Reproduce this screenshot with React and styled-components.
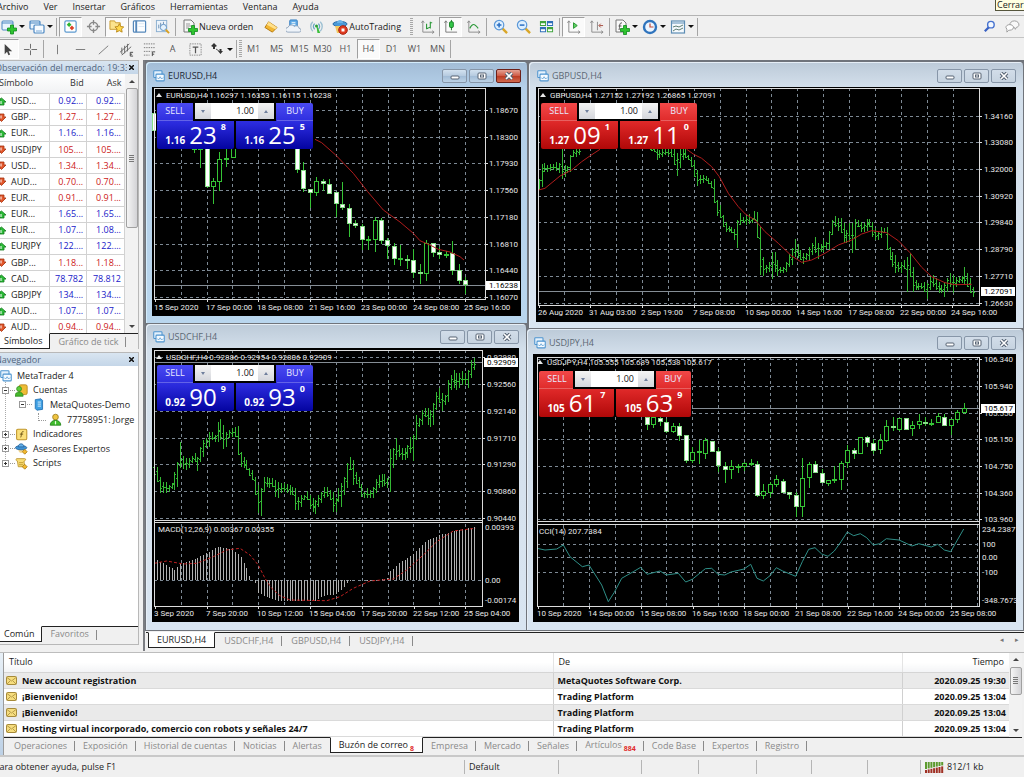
import React from "react";
import styled, { createGlobalStyle, css } from "styled-components";

const Global = createGlobalStyle`
  *, *::before, *::after { box-sizing: border-box; }
  body { margin: 0; background: #f0f0f0; }
  button, input { font: inherit; color: inherit; margin: 0; padding: 0; border: 0; background: none; }
  ul { list-style: none; margin: 0; padding: 0; }
  table { border-collapse: collapse; border-spacing: 0; }
`;

const Page = styled.div`
  position: relative;
  display: flex;
  flex-direction: column;
  min-height: 100vh;
  overflow: hidden;
  background: #f0f0f0;
  color: #1c1c1c;
  font: 9px/12px "Open Sans", "Noto Sans", sans-serif;
`;

/* ---------- menu and toolbars ---------- */

const MenuBar = styled.nav`
  display: flex;
  height: 16px;
  padding-right: 40px;
  margin-left: -3px;
  gap: 15px;
  border-bottom: 1px solid #b4b4b4;
`;
const MenuItem = styled.button`
  height: 14px;
  white-space: nowrap;
`;
const CloseTip = styled.div`
  position: absolute;
  top: -1px;
  right: -2px;
  width: 31px;
  height: 12px;
  padding-left: 1px;
  line-height: 10px;
  border: 1px solid #55553c;
  background: #ffffe1;
`;
const Toolbar = styled.div`
  display: flex;
  align-items: center;
  height: 22px;
  overflow: hidden;
  border-bottom: ${(p) => (p.$line ? "1px solid #c4c4c4" : "0")};
  margin-left: ${(p) => (p.$shift ? "-4px" : "-1px")};
`;
const Tool = styled.button`
  display: flex;
  flex: none;
  align-items: center;
  justify-content: center;
  width: 23px;
  height: 20px;
  color: #555;
  ${(p) =>
    p.$pressed &&
    css`
      background: #fafafa;
      border: 1px solid;
      border-color: #9f9f9f #fff #fff #9f9f9f;
    `}
`;
const SplitTool = styled(Tool)`
  width: 28px;
  gap: 1px;
`;
const Caret = styled.span`
  width: 0;
  margin-left: 1px;
  border: 3px solid transparent;
  border-top-color: #111;
  border-bottom: 0;
`;
const TextTool = styled(Tool)`
  width: auto;
  padding: 0 6px 0 4px;
  gap: 1px;
  color: #1c1c1c;
  white-space: nowrap;
`;
const Divider = styled.span`
  flex: none;
  width: 1px;
  height: 18px;
  margin: 0 2px 0 1px;
  background: #a5a5a5;
`;
const Grip = styled.span`
  flex: none;
  width: 3px;
  height: 18px;
  margin: 0 ${(p) => (p.$wide ? 3 : 0)}px;
  background: repeating-linear-gradient(#a8a8a8 0 1px, #f0f0f0 1px 2px);
`;
const Push = styled.span`
  flex: 1;
`;

const Svg = ({ size = 16, children }) => (
  <svg width={size} height={size} viewBox="0 0 16 16" fill="none" aria-hidden="true">
    {children}
  </svg>
);
const Plus = ({ x = 0, y = 0 }) => (
  <path
    transform={`translate(${x} ${y})`}
    d="M3 0h3v3h3v3H6v3H3V6H0V3h3z"
    fill="#2fc42f"
    stroke="#0d8a1c"
    strokeWidth=".8"
  />
);
const icons = {
  newChart: (
    <>
      <rect x="1" y="2" width="11" height="9" rx="1" fill="#eaf4fd" stroke="#4b87c2" />
      <path d="M1 4h11" stroke="#4b87c2" />
      <Plus x={6.5} y={6} />
    </>
  ),
  profiles: (
    <>
      <rect x="1" y="2" width="10" height="8" rx="1" fill="#eaf4fd" stroke="#4b87c2" strokeWidth="1.2" />
      <path d="M1 4h10" stroke="#4b87c2" />
      <rect x="5" y="6" width="10" height="8" rx="1" fill="#f7fbff" stroke="#4b87c2" strokeWidth="1.2" />
      <path d="M7 12h6" stroke="#79a9d8" />
    </>
  ),
  market: (
    <>
      <rect x="2" y="2" width="12" height="12" rx="1.5" fill="#fff" stroke="#5f9bd0" strokeWidth="1.3" />
      <path d="M4 6l2.500-2.500L9 6 6.500 8.500z" fill="#2db52d" />
      <path d="M7 9.500L9.500 7l2.500 2.500L9.500 12z" fill="#dc4327" />
    </>
  ),
  target: (
    <>
      <circle cx="8" cy="8" r="4.500" stroke="#888" strokeWidth="1.400" />
      <path d="M8 1v5M8 10v5M1 8h5M10 8h5" stroke="#888" strokeWidth="1.400" />
    </>
  ),
  favorites: (
    <>
      <path d="M1 4V2h5l1 2h5v7H1z" fill="#fbe38d" stroke="#c79a2c" />
      <path d="M11 5l1.500 3 3.200.4-2.300 2.300.6 3.300-3-1.600L8 14l.6-3.300-2.300-2.300 3.200-.4z" fill="#ffd84b" stroke="#bb8a1b" />
    </>
  ),
  terminal: (
    <>
      <rect x="1.500" y="2" width="13" height="12" rx="1" fill="#fdfeff" stroke="#5588bb" strokeWidth="1.300" />
      <path d="M4.500 2v12" stroke="#5588bb" strokeWidth="2" />
      <path d="M7 5h6M7 8h6" stroke="#dbe8f3" />
    </>
  ),
  tester: (
    <>
      <rect x="1.500" y="1.500" width="11" height="12" fill="#edf4fb" stroke="#89aed0" />
      <path d="M4 10V6M6 8V4M9 6V3" stroke="#6c8fb2" />
      <circle cx="9" cy="9" r="3.300" fill="#e5f2fd" stroke="#5b8fc2" />
      <path d="M11.500 11.500L15 15" stroke="#d9a022" strokeWidth="2" />
    </>
  ),
  order: (
    <>
      <path d="M2 1h7l3 3v9H2z" fill="#f6f6f6" stroke="#777" />
      <path d="M4 5h4M4 7h5M4 9h3" stroke="#999" />
      <Plus x={6.5} y={6.5} />
    </>
  ),
  gold: (
    <>
      <path d="M2 9l4-6 9 6-5 5z" fill="#f2b632" stroke="#b57a12" />
      <path d="M6 3l9 6-2 2-9-5z" fill="#ffe08a" />
    </>
  ),
  cloud: (
    <>
      <rect x="4" y="1" width="8" height="8" rx="1" fill="#65aee8" stroke="#2e7ac0" />
      <path d="M6 4h4M6 6h4" stroke="#fff" />
      <path d="M2 14a2.500 2.500 0 010-5 4 4 0 017-1 3 3 0 015 2 2 2 0 010 4z" fill="#eef3f9" stroke="#93a6bd" />
    </>
  ),
  signal: (
    <>
      <path d="M4 3a7 7 0 000 10M12 3a7 7 0 010 10" stroke="#9bbfd2" strokeWidth="1.400" />
      <path d="M6 5a4.500 4.500 0 000 6M10 5a4.500 4.500 0 010 6" stroke="#6aa6c4" strokeWidth="1.300" />
      <path d="M8 8l1 7h3L9 8z" fill="#3cbf3c" />
      <circle cx="8" cy="7.500" r="1.600" fill="#2a9f3a" />
    </>
  ),
  auto: (
    <>
      <ellipse cx="8" cy="5" rx="7" ry="2.600" fill="#4b9ad8" stroke="#2a6ca8" />
      <path d="M5 4c0-4 6-4 6 0z" fill="#6bb3e8" />
      <path d="M3 7h9v7H5z" fill="#f3c85e" />
      <circle cx="11" cy="11" r="4.300" fill="#e03a20" stroke="#a92412" />
      <rect x="9.500" y="9.500" width="3" height="3" fill="#fff" />
    </>
  ),
  bars: (
    <>
      <path d="M3 2v12h12M1.500 4L3 2l1.500 2M13 12.500L15 14l-2 1.500" stroke="#8a8a8a" />
      <path d="M7 5v6M7 10h2M11 3v7M9 9h2M11 4h2" stroke="#2f9b3c" strokeWidth="1.200" />
    </>
  ),
  candle: (
    <>
      <path d="M3 2v12h12M1.500 4L3 2l1.500 2" stroke="#777" />
      <path d="M9 1v11" stroke="#157d22" />
      <rect x="7" y="3" width="4" height="6" rx="1" fill="#34c84a" stroke="#157d22" />
    </>
  ),
  line: (
    <>
      <path d="M3 2v12h12M1.500 4L3 2l1.500 2M13 12.500L15 14l-2 1.500" stroke="#8a8a8a" />
      <path d="M4 10c3-6 5-5 9 0" stroke="#2f9b3c" strokeWidth="1.200" />
    </>
  ),
  zoomIn: (
    <>
      <path d="M10 10l5 5" stroke="#d9a628" strokeWidth="2.500" />
      <circle cx="6.500" cy="6.500" r="5" fill="#dff0ff" stroke="#5b98d8" strokeWidth="1.300" />
      <path d="M4 6.500h5M6.500 4v5" stroke="#2a6fc4" strokeWidth="1.600" />
    </>
  ),
  zoomOut: (
    <>
      <path d="M10 10l5 5" stroke="#d9a628" strokeWidth="2.500" />
      <circle cx="6.500" cy="6.500" r="5" fill="#dff0ff" stroke="#5b98d8" strokeWidth="1.300" />
      <path d="M4 6.500h5" stroke="#2a6fc4" strokeWidth="1.600" />
    </>
  ),
  tile: (
    <>
      <rect x="1" y="2" width="14" height="12" fill="#e8f1fa" />
      <path d="M1 2h6.500v5.500H1zM8.500 8.500H15V14H8.500z" fill="#3fa43c" />
      <path d="M8.500 2H15v5.500H8.500zM1 8.500h6.500V14H1z" fill="#2f6fb8" />
      <path d="M2 5.500h4.500M9.500 5.500H14M2 12h4.500M9.500 12H14" stroke="#fff" strokeWidth="2" />
    </>
  ),
  scroll: (
    <>
      <path d="M3 2v12h12M1.500 4L3 2l1.500 2M13 12.500L15 14l-2 1.500" stroke="#8a8a8a" />
      <path d="M8 4l4 3-4 3z" fill="#5fcf62" stroke="#279632" />
    </>
  ),
  shift: (
    <>
      <path d="M3 2v12h12M1.500 4L3 2l1.500 2M13 12.500L15 14l-2 1.500M9 3v9" stroke="#8a8a8a" />
      <path d="M15 7h-4M12.500 5L10.500 7l2 2" stroke="#a4493b" />
    </>
  ),
  indicators: (
    <>
      <path d="M2 1h7l3 3v9H2z" fill="#fafafa" stroke="#777" />
      <path d="M8 4c-3-1-2 4-3 7M4.500 7h3" stroke="#555" />
      <Plus x={6.5} y={6.5} />
    </>
  ),
  clock: (
    <>
      <circle cx="8" cy="8" r="6" fill="#eef6ff" stroke="#2f74bd" strokeWidth="2.400" />
      <path d="M8 4.500V8h3.500" stroke="#c14b3a" strokeWidth="1.200" />
    </>
  ),
  template: (
    <>
      <rect x="1.500" y="2" width="13" height="12" fill="#f4f9fd" stroke="#5d8db4" strokeWidth="1.200" />
      <path d="M2 4h12" stroke="#5d8db4" />
      <path d="M3 8l3-1 3 1 4-2M3 12l3-2 3 1 4-2" stroke="#5e7d72" />
    </>
  ),
  search: (
    <>
      <circle cx="9.500" cy="6" r="3.500" fill="#f3f8ff" stroke="#4672cf" strokeWidth="1.500" />
      <path d="M7 9l-4 4" stroke="#3a62c4" strokeWidth="2.400" />
    </>
  ),
  chat: (
    <>
      <path d="M8 9c-5-1-3-7 2-7s7 6 2 7l-1 2-1-2z" fill="#f8f8f8" stroke="#9a9a9a" />
      <path d="M1 9c0-4 8-4 8 0 0 3-4 3-5 3l-2 2v-3z" fill="#fff" stroke="#9a9a9a" />
    </>
  ),
  cursor: <path d="M5 2v11l2.500-2.500L9 14l1.800-.8-1.600-3.400H13z" fill="#444" />,
  cross: <path d="M8 2v5M8 9v5M1 8h6M9 8h6" stroke="#666" />,
  vline: <path d="M8 3v10" stroke="#777" />,
  hline: <path d="M3 8h10" stroke="#777" />,
  trend: <path d="M3 13L13 4" stroke="#777" />,
  channel: (
    <>
      <path d="M1 11L11 2M3 14l10-9M3 6v7M6 4v8M9 2v8" stroke="#666" />
      <path d="M15 11h-3v4h3M12 13h2" stroke="#444" />
    </>
  ),
  fibo: (
    <>
      <path d="M2 2h12M2 6h12M2 10h8M2 14h6" stroke="#777" strokeDasharray="1.500 1" />
      <path d="M14 10.500h-3V15M11 13h2" stroke="#444" />
    </>
  ),
  textLabel: (
    <>
      <rect x="2" y="2" width="12" height="12" stroke="#888" strokeDasharray="1.500 1" />
      <path d="M5 5.500h6M8 5.500V12" stroke="#555" strokeWidth="1.300" />
    </>
  ),
  arrows: (
    <>
      <path d="M2 5l3-3 3 3-2 1v2H4V6zM9 10h1.500V8h2v2H14l-2.500 3z" fill="#333" />
      <path d="M7 8l3 2" stroke="#555" />
    </>
  ),
  chart: (
    <>
      <rect x="1" y="1" width="11" height="9" rx="1" fill="#e4f1fc" stroke="#4d94cf" strokeWidth="1.400" />
      <rect x="4" y="5.500" width="11" height="9" rx="1" fill="#f6fbff" stroke="#4d94cf" strokeWidth="1.400" />
      <path d="M5.500 10l2 2 2-3 2 3 2-2" stroke="#4d94cf" />
    </>
  ),
  users: (
    <>
      <rect x="5" y="1" width="10" height="12" rx="2" fill="#eebc35" stroke="#b5851b" />
      <circle cx="5" cy="6" r="3" fill="#5fce3c" stroke="#2e8d1d" />
      <path d="M0 15c0-7 10-7 10 0z" fill="#46b82b" stroke="#2e8d1d" />
    </>
  ),
  server: (
    <>
      <path d="M4 2l7-1 2 2v11l-7 1-2-2z" fill="#3f9fe2" stroke="#1b6db0" />
      <path d="M7 5h4M7 7.500h4M7 10h4" stroke="#d6efff" strokeWidth="1.200" />
    </>
  ),
  user: (
    <>
      <circle cx="8" cy="5" r="3.500" fill="#f0c441" stroke="#9a7a18" />
      <path d="M1.500 15c0-8 13-8 13 0z" fill="#3fbd2c" stroke="#23811a" />
      <path d="M8 10v4" stroke="#eaffe0" strokeWidth="1.500" />
    </>
  ),
  fx: (
    <>
      <rect x="2" y="1.500" width="12.500" height="13" rx="1.500" fill="#fbe07a" stroke="#c0962b" strokeWidth="1.300" />
      <path d="M10.500 4.500c-3-1-2 4-3.500 7M6 7.500h4" stroke="#6d5418" strokeWidth="1.200" />
    </>
  ),
  expert: (
    <>
      <path d="M4 9c0 6 7 6 7 0z" fill="#f4d890" />
      <ellipse cx="7.500" cy="7" rx="7" ry="2.600" fill="#3f93d6" stroke="#25639a" />
      <path d="M4 6c0-5 7-5 7 0z" fill="#64b0ea" stroke="#25639a" />
      <path d="M12 9l3 3-3 3-3-3z" fill="#f4b92e" stroke="#a87a14" />
    </>
  ),
  script: (
    <>
      <path d="M2 2h10c2 0 1 3-1 3l1 7H4L3 5C1 5 1 2 2 2z" fill="#f8dd74" stroke="#b78f25" />
      <path d="M5 7h5M5 9.500h5" stroke="#b78f25" />
      <path d="M12 9l3 3-3 3-3-3z" fill="#f4b92e" stroke="#a87a14" />
    </>
  ),
};
const Icon = ({ name, size }) => <Svg size={size}>{icons[name]}</Svg>;

const IconTool = ({ name, label, pressed }) => (
  <Tool $pressed={pressed} aria-label={label} aria-pressed={pressed}>
    <Icon name={name} size={15} />
  </Tool>
);
const MenuTool = ({ name, label }) => (
  <SplitTool aria-label={label} aria-haspopup="menu">
    <Icon name={name} />
    <Caret />
  </SplitTool>
);

/* ---------- shared tabs and scrollbars ---------- */

const TabStrip = styled.div`
  display: flex;
  align-items: flex-start;
  border-top: 1px solid #222;
  color: #8a8a8a;
`;
const TabButton = styled.button`
  position: relative;
  flex: none;
  height: 15px;
  padding: 0 ${(p) => p.$pad ?? 8}px;
  white-space: nowrap;
  &::after {
    content: "";
    position: absolute;
    right: 0;
    top: 3px;
    height: 10px;
    border-right: ${(p) => (p.$bare ? "0" : "1px solid #8a8a8a")};
  }
  ${(p) =>
    p.$on &&
    css`
      margin-top: -1px;
      height: 16px;
      background: #fff;
      color: #1c1c1c;
      border: 1px solid #222;
      border-top-color: #fff;
      &::after { border: 0; }
    `}
`;
const EdgeTab = styled(TabButton)`
  padding: 0 7px 0 4px;
  border-left: 0;
`;
const Badge = styled.small`
  font-size: 7px;
  line-height: 7px;
  font-weight: 700;
  color: #e02a2a;
  vertical-align: -3px;
  margin-left: 2px;
`;
const ScrollTrack = styled.div`
  flex: none;
  display: flex;
  flex-direction: column;
  align-items: center;
  width: 13px;
  background: #f2f2f2;
`;
const ScrollThumb = styled.span`
  display: flex;
  align-items: center;
  justify-content: center;
  width: 12px;
  height: ${(p) => p.$h}px;
  border: 1px solid #a0a0a0;
  border-radius: 2px;
  background: linear-gradient(90deg, #f5f5f5, #d3d3d6);
  &::before {
    content: "";
    width: 5px;
    height: 7px;
    background: repeating-linear-gradient(#777 0 1px, transparent 1px 2px);
  }
`;
const ScrollArrow = styled.button`
  flex: none;
  width: 13px;
  height: 14px;
  display: flex;
  align-items: center;
  justify-content: center;
  &::before {
    content: "";
    border: 3px solid transparent;
    border-top: ${(p) => (p.$up ? "0" : "3px solid #444")};
    border-bottom: ${(p) => (p.$up ? "3px solid #444" : "0")};
  }
`;
const Scrollbar = ({ thumb, name }) => (
  <ScrollTrack>
    <ScrollArrow $up aria-label={`${name}: subir`} />
    <ScrollThumb $h={thumb} />
    <Push />
    <ScrollArrow aria-label={`${name}: bajar`} />
  </ScrollTrack>
);

/* ---------- side panels ---------- */

const Main = styled.div`
  display: flex;
  flex: 1 0 auto;
`;
const Side = styled.aside`
  display: flex;
  flex-direction: column;
  flex: none;
  width: 145px;
  padding-right: 4px;
  border-right: 2px solid #7b7d82;
`;
const Panel = styled.section`
  display: flex;
  flex-direction: column;
  border: solid #b8b8b8;
  border-width: 1px 1px 0 0;
  flex: ${(p) => (p.$grow ? 1 : "none")};
`;
const PanelTitle = styled.header`
  display: flex;
  align-items: center;
  justify-content: space-between;
  height: 13px;
  padding-right: 2px;
  overflow: hidden;
  white-space: nowrap;
  color: #51667e;
  background: linear-gradient(#d9e5f1, #c4d6e8);
`;
const PanelName = styled.span`
  flex: 1;
  min-width: 0;
  overflow: hidden;
  text-indent: -5px;
`;
const PanelClose = styled.button`
  display: flex;
  align-items: center;
  justify-content: center;
  width: 9px;
  height: 12px;
`;
const CloseMark = () => (
  <svg width="5" height="5" viewBox="0 0 5 5" aria-hidden="true">
    <path d="M0 0l5 5M5 0L0 5" stroke="#111" strokeWidth="1.500" />
  </svg>
);
const MarketBody = styled.div`
  display: flex;
  height: 259px;
  overflow: hidden;
  background: #fff;
`;
const MarketTable = styled.table`
  flex: 1;
  height: 262px;
  table-layout: fixed;
  th {
    height: 19px;
    padding: 0 3px 0 0;
    font-weight: 400;
    color: #333;
    text-align: right;
    border-bottom: 1px solid #d5d5d5;
    background: linear-gradient(#fff, #f1f2f4);
  }
  th:first-child { text-align: left; text-indent: -1px; }
  td {
    padding: 0 3px 0 0;
    text-align: right;
    line-height: 14px;
    border: solid #d2d2d2;
    border-width: 0 1px 1px 0;
    white-space: nowrap;
  }
  td:first-child { text-align: left; }
`;
const Quote = styled.td`
  color: ${(p) => (p.$up ? "#2020c8" : "#cc2020")};
`;
const Symbol = styled.span`
  display: flex;
  align-items: center;
  gap: 5px;
`;

const quotes = [
  ["USD...", "0.92...", "0.92...", 1],
  ["GBP...", "1.27...", "1.27...", 0],
  ["EUR...", "1.16...", "1.16...", 1],
  ["USDJPY", "105....", "105....", 0],
  ["USD...", "1.34...", "1.34...", 0],
  ["AUD...", "0.70...", "0.70...", 0],
  ["EUR...", "0.91...", "0.91...", 0],
  ["EUR...", "1.65...", "1.65...", 1],
  ["EUR...", "1.07...", "1.08...", 1],
  ["EURJPY", "122....", "122....", 1],
  ["GBP...", "1.18...", "1.18...", 0],
  ["CAD...", "78.782", "78.812", 1],
  ["GBPJPY", "134....", "134....", 1],
  ["AUD...", "1.07...", "1.07...", 1],
  ["AUD...", "0.94...", "0.94...", 0],
];

const Direction = ({ up }) => (
  <svg width="6" height="9" viewBox="0 0 6 9" aria-hidden="true">
    <path
      d={up ? "M1.500 1L6 5H4v3H0V2z" : "M0 1h4v3h2L1.500 8.500 0 7z"}
      fill={up ? "#2cbb38" : "#e2562a"}
      stroke={up ? "#12791c" : "#a5320f"}
      strokeWidth=".8"
    />
    <path d={up ? "M1 4v3" : "M1 2.500v3"} stroke="#fff" />
  </svg>
);

const Tree = styled.ul`
  flex: 1;
  padding-top: 2px;
  line-height: 14px;
  background: repeating-linear-gradient(#aaa 0 1px, #fff 1px 2px) 5px 16px / 1px 80px no-repeat, #fff;
`;
const Node = styled.li`
  display: flex;
  align-items: center;
  height: ${(p) => (p.$tall ? 15 : 14)}px;
  padding-left: ${(p) => p.$in}px;
  gap: 5px;
  white-space: nowrap;
`;
const Expander = styled.button`
  position: relative;
  flex: none;
  width: 7px;
  height: 7px;
  margin-right: 1px;
  border: 1px solid #999;
  background:
    linear-gradient(#333, #333) center / 3px 1px no-repeat,
    ${(p) => (p.$open ? "" : "linear-gradient(#333, #333) center / 1px 3px no-repeat,")}
    #fff;
  &::after {
    content: "";
    position: absolute;
    left: 7px;
    top: 2px;
    width: 5px;
    border-top: 1px dotted #999;
  }
`;
const Elbow = styled.span`
  width: 8px;
  height: 8px;
  margin: 0 -2px 6px 0;
  border: dotted #999;
  border-width: 0 0 1px 1px;
`;

/* ---------- chart windows ---------- */

const Workspace = styled.main`
  display: flex;
  flex-direction: column;
  flex: 1;
  min-width: 0;
`;
const Desktop = styled.div`
  display: flex;
  padding: 2px 0 0;
  background: #70747b;
  border-bottom: 1px solid #70747b;
`;
const Stack = styled.div`
  display: flex;
  flex-direction: column;
  gap: 1px;
  min-width: 0;
  flex: ${(p) => p.$share} 1 0;
`;
const Frame = styled.section`
  padding: 0 ${(p) => p.$pad[1]}px ${(p) => p.$pad[2]}px ${(p) => p.$pad[3]}px;
  margin: 0 ${(p) => p.$gap[0]}px 0 ${(p) => p.$gap[1]}px;
  border-radius: 4px 4px 0 0;
  color: ${(p) => (p.$active ? "#1d2835" : "#5c6874")};
  background: ${(p) =>
    p.$active
      ? "linear-gradient(#a2bcd6, #b4cfe8 25px, #b9d6ee)"
      : "linear-gradient(#bccad8, #d3dfeb 25px, #d9e5f1)"};
  box-shadow: inset 1px 1px 0 ${(p) => (p.$active ? "#d4ecfb" : "#e6eef6")};
`;
const Caption = styled.header`
  display: flex;
  align-items: center;
  gap: 3px;
  height: ${(p) => p.$h}px;
  padding: 2px 0 0 1px;
`;
const CaptionButton = styled.button`
  display: flex;
  align-items: center;
  justify-content: center;
  width: 25px;
  height: 14px;
  margin-left: -1px;
  border: 1px solid ${(p) => (p.$close ? "#6d2018" : "#8796a8")};
  border-radius: 2px;
  background: ${(p) =>
    p.$close
      ? "linear-gradient(#e3a294, #cf5843 50%, #bb3a22 51%, #d2694e)"
      : p.$active
      ? "linear-gradient(#d3e2f0, #b5cadf 50%, #a2bcd6 51%, #bcd2e6)"
      : "linear-gradient(#d2dde9, #c6d3e0)"};
`;
const CaptionName = styled.span`
  flex: 1;
`;

const Canvas = styled.div`
  position: relative;
  background: #000;
  svg.plot {
    display: block;
    width: 100%;
    height: auto;
    font: 8px "Roboto", "Liberation Sans", sans-serif;
  }
`;

const DealBox = styled.div`
  position: absolute;
  left: ${(p) => p.$left}px;
  top: ${(p) => p.$top}px;
  display: grid;
  grid-template-columns: 1fr 1fr;
  gap: 2px;
  width: ${(p) => p.$w}px;
  height: 46px;
  padding: 0 1px;
  background: #000;
  color: #fff;
`;
const Deal = styled.button`
  display: flex;
  flex-direction: column;
  align-items: ${(p) => (p.$buy ? "flex-end" : "flex-start")};
  border-radius: 2px;
  background: ${(p) =>
    p.$red
      ? "linear-gradient(#f24848, #dc2626 45%, #b00808)"
      : "linear-gradient(#4a4af2, #2a2adc 45%, #0404a0)"};
`;
const DealName = styled.span`
  width: 36px;
  height: 18px;
  padding-top: 2px;
  text-align: center;
  color: #e8e8ff;
  border-bottom: 1px solid rgba(255, 255, 255, 0.25);
`;
const Price = styled.span`
  display: flex;
  align-items: flex-end;
  align-self: center;
  height: 26px;
  font-size: 10px;
  font-weight: 700;
  line-height: 13px;
`;
const Pips = styled.b`
  margin: 0 4px;
  font-size: 24px;
  line-height: 25px;
  font-weight: 400;
`;
const Point = styled.sup`
  align-self: flex-start;
  font-size: 9px;
  line-height: 11px;
`;
const Lots = styled.div`
  position: absolute;
  top: 0;
  left: 50%;
  display: flex;
  width: 83px;
  height: 18px;
  margin-left: -42px;
  border: solid #000;
  border-width: 0 2px 2px;
  background: #fff;
  color: #111;
  input {
    flex: 1;
    min-width: 0;
    padding-right: 4px;
    text-align: right;
  }
`;
const Step = styled.button`
  display: flex;
  align-items: center;
  justify-content: center;
  width: 16px;
  background: linear-gradient(#f4f4f4, #d4d6dc);
  &::before {
    content: "";
    border: 2px solid transparent;
    border-top: ${(p) => (p.$up ? "0" : "3px solid #6f7f9c")};
    border-bottom: ${(p) => (p.$up ? "3px solid #6f7f9c" : "0")};
  }
`;

const DealPanel = ({ red, top, left = 4, width, sell, buy, pair }) => (
  <DealBox $top={top} $left={left} $w={width}>
    {[["SELL", sell], ["BUY", buy]].map(([side, p], i) => (
      <Deal key={side} $red={red} $buy={i === 1}>
        <DealName>{side}</DealName>
        <Price>
          {p[0]}
          <Pips>{p[1]}</Pips>
          <Point>{p[2]}</Point>
        </Price>
      </Deal>
    ))}
    <Lots>
      <Step aria-label="Menos volumen" />
      <input aria-label={`Volumen ${pair}`} defaultValue="1.00" />
      <Step $up aria-label="Más volumen" />
    </Lots>
  </DealBox>
);

/* Plot data is stored in ticks, three to a pixel, measured from each plot's origin. */
const range = (n) => Array.from({ length: n }, (_, i) => i);

const Plot = ({ w, h, origin, box, split, gridX, gridY, subGrid = [], labels, subLabels = [], axisX, times, timeY, last, title, sub, header, children }) => {
  const X = (v) => Math.round((v - origin[0]) / 3);
  const Y = (v) => Math.round((v - origin[1]) / 3);
  const [l, t, r, b] = box;
  return (
    <svg className="plot" viewBox={`0 0 ${w} ${h}`} role="img" aria-label={title}>
      <g stroke="#7d8994" strokeDasharray="3 3" shapeRendering="crispEdges">
        {gridX.map((v) => <path key={v} d={`M${X(v) + 0.5} ${Y(t)}V${Y(b)}`} />)}
        {gridY.concat(subGrid).map((v) => <path key={v} d={`M${X(l)} ${Y(v) + 0.5}H${X(r)}`} />)}
      </g>
      <path d={`M${X(l)} ${Y(last) + 0.5}H${X(r)}`} stroke="#858d95" shapeRendering="crispEdges" />
      {children(X, Y, origin)}
      <g stroke="#dcdcdc" fill="none" shapeRendering="crispEdges">
        <rect x={X(l) + 0.5} y={Y(t) + 0.5} width={X(r) - X(l)} height={Y(b) - Y(t)} />
        {split && <path d={`M${X(l)} ${Y(split[0]) + 0.5}H${X(r)}M${X(l)} ${Y(split[1]) + 0.5}H${X(r)}`} />}
        {gridY.map((v) => <path key={v} d={`M${X(r)} ${Y(v) + 0.5}h3`} />)}
        {times.map(([v]) => <path key={v} d={`M${X(v + 3) + 0.5} ${Y(b)}v3`} />)}
      </g>
      <g fill="#e8e8e8">
        {labels.map(([v, s]) => <text key={s} x={X(axisX)} y={Y(v) + 3}>{s}</text>)}
        {subLabels.map(([v, s]) => <text key={s} x={X(axisX) - 2} y={Y(v) + 3}>{s}</text>)}
        {times.map(([v, s]) => <text key={s} x={X(v)} y={Y(timeY)}>{s}</text>)}
        <text x={14} y={header[0]}>{header[1]}</text>
        <path d={`M4 ${header[0] - 1}l3 -4 3 4z`} />
        {sub && <text x={6} y={Y(sub[0])}>{sub[1]}</text>}
      </g>
      <rect x={X(axisX) - 3} y={Y(last) - 4} width="34" height="9" fill="#fff" />
      <text x={X(axisX)} y={Y(last) + 3} fill="#000">{title}</text>
    </svg>
  );
};

const Candles = ({ data, X, Y }) => (
  <g shapeRendering="crispEdges" stroke="#35c435">
    {data.map(([x, kind, top, bottom, hi, lo]) => {
      const cx = X(x) + 0.5;
      const y = Y(top);
      const hh = Math.max(1, Y(bottom) - y - 1);
      return (
        <g key={x}>
          <path d={`M${cx} ${Y(hi)}V${Y(lo)}`} />
          <rect x={cx - 2} y={y + 0.5} width="4" height={hh} stroke={kind ? "#86dc86" : "#35c435"} fill={kind ? "#fff" : "#000"} />
        </g>
      );
    })}
  </g>
);
const Bars = ({ data, x0, step, X, Y }) => (
  <g shapeRendering="crispEdges" stroke="#34b834">
    {data.map((bar, i) => {
      if (!bar) return null;
      const next = data[i + 1] || bar;
      const prev = data[i - 1] || bar;
      const clamp = (v) => Math.min(bar[1] - 3, Math.max(bar[0] + 3, v));
      const close = clamp((next[0] + next[1]) / 2);
      const open = clamp((bar[0] + bar[1] + prev[0] + prev[1]) / 4);
      const cx = X(x0 + i * step) + 0.5;
      return (
        <path
          key={i}
          d={`M${cx} ${Y(bar[0])}V${Y(bar[1])}M${cx - 1.5} ${Y(open) + 0.5}H${cx}M${cx} ${Y(close) + 0.5}h1.5`}
        />
      );
    })}
  </g>
);
const Curve = ({ pts, origin, color, dash }) => (
  <polyline
    points={pts.map(([x, y]) => `${((x - origin[0]) / 3).toFixed(1)},${((y - origin[1]) / 3).toFixed(1)}`).join(" ")}
    fill="none"
    stroke={color}
    strokeDasharray={dash}
  />
);
const pairs = (s) => s.trim().split(/\s+/).map((p) => (p === "-" ? null : p.split(",").map(Number)));

const eurCandles = pairs(`
43,1,160,213,160,213 162,0,265,270,265,278 180,0,265,268,265,325 200,1,265,380,265,385 219,0,363,380,355,433 238,0,298,365,275,393
258,0,293,296,265,322 278,0,262,295,262,295 471,1,265,330,265,340 490,1,330,388,305,395 510,1,388,398,388,445
529,0,362,399,350,407 548,1,362,371,358,392 568,1,371,402,358,402 587,1,397,432,397,470 606,1,432,443,367,450
626,1,443,491,432,530 645,1,490,499,480,505 665,1,499,540,492,570 684,0,536,539,528,570 704,0,481,540,470,575
723,1,481,542,475,553 742,1,541,558,535,598 762,1,558,598,550,615 781,0,594,597,555,618 801,1,596,602,585,628
820,1,601,639,566,655 840,1,635,643,612,672 859,0,550,643,541,662 878,1,550,579,550,590 898,1,577,584,562,597
917,0,581,584,572,595 937,1,580,632,543,645 956,1,631,663,612,673 976,1,661,675,650,702`);
const eurAverage = pairs(`525,238 545,248 587,285 640,340 683,395 730,450 780,486 820,520 840,542 870,555 895,568 930,576 960,590 972,600`);

const jpyCandles = pairs(`
366,1,275,300,275,314 385,0,275,300,275,308 405,1,278,290,275,303 424,1,291,321,283,325 444,0,303,320,293,325
463,1,303,332,293,347 482,1,331,409,331,415 502,0,382,409,365,413 521,0,378,381,344,417 541,0,346,387,340,403
560,1,348,381,348,381 579,1,378,424,370,440 599,1,424,434,412,473 618,0,424,434,405,463 638,0,424,427,417,443
657,0,415,427,410,438 677,0,415,418,401,422 696,1,418,514,408,517 715,0,499,513,478,522 735,0,478,503,472,515
754,0,463,479,450,487 773,1,467,503,462,503 793,1,502,510,500,523 812,1,510,545,502,577 832,0,460,545,398,575
851,0,418,458,412,488 870,1,418,445,408,445 890,1,445,475,433,475 909,0,464,477,464,483 928,0,461,464,424,475
948,0,415,464,408,496 967,0,376,415,360,430 986,1,376,388,370,402 1006,0,337,387,335,387 1025,1,336,354,333,367
1045,1,354,378,342,387 1064,0,346,376,328,388 1084,0,303,347,286,350 1103,1,303,310,276,318 1122,0,280,314,280,318
1142,1,280,314,280,314 1161,0,299,312,288,333 1181,0,289,299,268,313 1200,1,290,294,275,303 1219,0,293,296,283,302
1238,0,273,295,265,295 1258,1,275,304,268,304 1277,0,283,304,283,330 1297,0,260,284,255,293 1316,0,248,263,233,266`);
const cci = pairs(`36,670 60,675 95,672 115,660 135,695 172,725 192,720 230,780 250,830 268,802 290,760 325,740 347,727 366,748
405,738 424,750 460,745 482,771 502,763 541,731 560,730 579,748 599,750 618,741 657,732 677,718 696,760 715,768 735,752 754,728
773,738 812,754 832,710 851,673 870,668 890,687 909,694 928,678 948,650 967,621 986,632 1006,626 1025,638 1045,660 1064,656
1084,641 1122,645 1161,663 1181,656 1219,666 1238,658 1258,675 1277,680 1316,612`);

const gbpBars = pairs(`
357,390 313,382 310,335 315,335 313,333 312,330 307,333 310,340 268,357 315,350 318,340 285,335 270,290 262,292 262,285
- - - - - - - - - - - - - - - - - - - - - - - -
262,272 262,275 265,300 270,295 268,292 265,285 262,288 265,290 262,315 280,348 268,325 262,300 265,295 285,300 290,322
300,350 330,377 345,372 345,370 348,362 355,373 362,385 358,430 420,468 435,475 465,500 487,515 497,515 500,518 507,540
480,565 460,495 470,490 468,495 463,492 475,490 452,480 455,535 500,645 590,648 615,640 605,635 575,657 577,635 600,648
620,640 622,640 605,635 583,620 565,615 538,590 552,595 570,600 580,613 580,600 562,600 550,585 530,580 548,597 552,575
540,575 545,568 512,572 480,525 468,500 475,512 475,520 490,548 510,550 490,545 490,580 478,570 480,500 485,515 490,515
478,512 477,500 485,530 505,540 515,540 500,535 503,520 500,570 560,600 575,620 585,640 605,635 605,640 600,628 590,695
578,650 620,695 660,690 670,690 668,688 665,695 668,718 650,690 645,680 655,690 665,700 675,700 668,710 655,695 640,680
645,700 650,680 650,670 648,668 620,675 640,680 655,700 680,712`);
const gbpAverage = [
  pairs(`41,390 60,385 105,348 140,330 170,305 196,287 225,268`),
  pairs(`485,268 506,283 530,295 560,320 583,350 610,400 640,440 661,462 690,480 720,515 760,550 800,588 830,607 860,600 900,580
  940,555 980,540 1010,522 1040,512 1085,518 1120,542 1155,578 1190,622 1220,650 1260,668 1290,674 1340,673`),
];

const chfBars = pairs(`
393,460 425,470 455,505 470,505 470,503 480,500 473,492 440,495 410,485 352,430 393,433 400,435 400,430 392,415 385,410
395,437 365,410 345,395 340,370 322,365 322,345 330,350 290,350 283,345 300,372 320,365 315,340 308,335 305,335 303,390
380,425 395,430 405,435 428,452 435,465 455,510 480,565 490,573 455,500 457,485 460,490 460,487 465,515 470,520 475,505
475,500 478,505 480,510 487,510 490,555 515,555 510,545 510,525 498,525 510,550 520,562 525,568 510,545 500,535 487,520
485,515 495,525 500,560 520,560 490,530 475,545 455,510 413,490 397,435 405,480 440,478 455,490 478,515 500,520 490,520
495,520 485,520 462,505 450,490 448,485 447,482 460,490 372,500 370,430 340,405 360,395 370,405 370,405 360,400 335,385
330,408 270,345 280,305 255,300 250,275 250,300 255,305 235,300 200,255 190,235 205,258 210,240 165,230 150,195 135,190
145,195 145,190 137,180 145,180 135,190 105,160 100,135`);
const macdProfile = pairs(`43,700 60,710 104,735 121,715 155,705 190,690 233,665 276,672 302,695 319,730 330,757 345,775 354,805 390,820 414,828
526,828 552,812 587,808 604,795 621,775 640,763 690,768 720,763 742,760 750,740 780,712 820,688 854,650 900,630 950,615 1010,605`);
const macdSignal = pairs(`43,715 80,708 130,717 170,715 220,695 260,675 300,670 330,690 355,720 375,760 395,790 420,812 450,825 560,827 600,815
640,790 690,768 760,762 800,735 850,690 890,650 940,618 1006,610`);
const macdAt = (x) => {
  const k = Math.max(1, macdProfile.findIndex((p) => p[0] >= x));
  const [a, b] = [macdProfile[k - 1], macdProfile[k]];
  return a[1] + ((b[1] - a[1]) * (x - a[0])) / (b[0] - a[0]);
};

const grid = (start, step, n) => range(n).map((i) => Math.round(start + i * step));
const zipLabels = (ys, names) => names.map((s, i) => [ys[i], s]);

const ChartWindow = ({ name, active, pad, gap, captionH, deal, children }) => (
  <Frame $active={active} $pad={pad} $gap={gap} aria-label={name}>
    <Caption $h={captionH}>
      <Icon name="chart" size={12} />
      <CaptionName>{name}</CaptionName>
      <CaptionButton $active={active} aria-label="Minimizar">
        <svg width="10" height="8"><rect x="1" y="4" width="8" height="3" rx="1" fill="#fff" stroke="#566373" /></svg>
      </CaptionButton>
      <CaptionButton $active={active} aria-label="Maximizar">
        <svg width="10" height="8"><rect x="1" y="1" width="8" height="6" rx="1" fill="#fff" stroke="#566373" /><rect x="3.500" y="3" width="3" height="2" fill="none" stroke="#566373" /></svg>
      </CaptionButton>
      <CaptionButton $close={active} aria-label="Cerrar ventana">
        <svg width="10" height="8">
          <path d="M2 1l6 6M8 1L2 7" stroke="#566373" strokeWidth="3.600" />
          <path d="M2 1l6 6M8 1L2 7" stroke="#fff" strokeWidth="1.600" />
        </svg>
      </CaptionButton>
    </Caption>
    <Canvas>
      {children}
      <DealPanel pair={name} {...deal} />
    </Canvas>
  </Frame>
);

const eurY = [151, 231, 310, 391, 471, 551, 631, 711];
const gbpY = [167, 247, 327, 407, 487, 567, 648, 728];
const chfY = [97, 178, 258, 338, 418, 498, 578];
const jpyY = [103, 183, 263, 343, 423, 503, 583];

const Charts = () => (
  <Desktop>
    <Stack $share={382}>
      <ChartWindow
        name="EURUSD,H4"
        active
        pad={[0, 6, 7, 6]}
        gap={[0, 1]}
        captionH={25}
        deal={{ top: 16, width: 158, sell: ["1.16", "23", "8"], buy: ["1.16", "25", "5"] }}
      >
        <Plot
          w={369} h={229} origin={[36, 81]} box={[42, 85, 1034, 717]}
          gridX={grid(122, 77.6, 12)} gridY={eurY} axisX={1048}
          labels={zipLabels(eurY, ["1.18670", "1.18300", "1.17930", "1.17560", "1.17180", "1.16810", "1.16440", "1.16070"])}
          times={[[42, "15 Sep 2020"], [197, "17 Sep 00:00"], [352, "18 Sep 08:00"], [507, "21 Sep 16:00"], [662, "23 Sep 00:00"], [818, "24 Sep 08:00"], [973, "25 Sep 16:00"]]}
          timeY={750} last={675} title="1.16238"
          header={[11, "EURUSD,H4  1.16297 1.16353 1.16115 1.16238"]}
        >
          {(X, Y, o) => (
            <>
              <Candles data={eurCandles} X={X} Y={Y} />
              <Curve pts={eurAverage} origin={o} color="#b01c1c" />
            </>
          )}
        </Plot>
      </ChartWindow>
      <ChartWindow
        name="USDCHF,H4"
        pad={[0, 7, 8, 6]}
        gap={[1, 1]}
        captionH={24}
        deal={{ top: 17, width: 158, sell: ["0.92", "90", "9"], buy: ["0.92", "93", "0"] }}
      >
        <Plot
          w={367} h={274} origin={[36, 69]} box={[42, 76, 1026, 843]} split={[584, 592]}
          gridX={grid(122, 77.6, 12)} gridY={chfY} subGrid={[765]} axisX={1040}
          labels={zipLabels(chfY, ["0.92980", "0.92560", "0.92140", "0.91710", "0.91290", "0.90860", "0.90440"])}
          subLabels={[[607, "0.00393"], [765, "0.00"], [825, "-0.00174"]]}
          times={[[42, "3 Sep 2020"], [197, "7 Sep 20:00"], [352, "10 Sep 12:00"], [507, "15 Sep 04:00"], [662, "17 Sep 20:00"], [818, "22 Sep 12:00"], [973, "25 Sep 04:00"]]}
          timeY={873} last={112} title="0.92909"
          header={[12, "USDCHF,H4  0.92886 0.92954 0.92806 0.92909"]}
          sub={[620, "MACD(12,26,9) 0.00367 0.00355"]}
        >
          {(X, Y, o) => (
            <>
              <Bars data={chfBars} x0={43} step={8.63} X={X} Y={Y} />
              <path
                d={range(112).map((i) => `M${X(43 + i * 8.63) + 0.5} ${Y(765)}V${Y(macdAt(43 + i * 8.63))}`).join("")}
                stroke="#b0b0b0"
                shapeRendering="crispEdges"
              />
              <Curve pts={macdSignal} origin={o} color="#c02020" dash="3 2" />
            </>
          )}
        </Plot>
      </ChartWindow>
    </Stack>
    <Stack $share={497}>
      <ChartWindow
        name="GBPUSD,H4"
        pad={[0, 7, 6, 7]}
        gap={[1, 2]}
        captionH={25}
        deal={{ red: true, top: 16, width: 158, sell: ["1.27", "09", "1"], buy: ["1.27", "11", "0"] }}
      >
        <Plot
          w={480} h={235} origin={[33, 81]} box={[38, 85, 1362, 735]}
          gridX={grid(118, 77.65, 16)} gridY={gbpY} axisX={1377}
          labels={zipLabels(gbpY, ["1.34160", "1.33080", "1.32000", "1.30920", "1.29840", "1.28790", "1.27710", "1.26630"])}
          times={[[38, "26 Aug 2020"], [193, "31 Aug 03:00"], [348, "2 Sep 19:00"], [503, "7 Sep 08:00"], [659, "10 Sep 00:00"], [814, "14 Sep 16:00"], [969, "17 Sep 08:00"], [1124, "22 Sep 00:00"], [1279, "24 Sep 16:00"]]}
          timeY={766} last={694} title="1.27091"
          header={[11, "GBPUSD,H4  1.27152 1.27192 1.26865 1.27091"]}
        >
          {(X, Y, o) => (
            <>
              <Bars data={gbpBars} x0={41} step={8.63} X={X} Y={Y} />
              {gbpAverage.map((pts, i) => <Curve key={i} pts={pts} origin={o} color="#b01c1c" />)}
            </>
          )}
        </Plot>
      </ChartWindow>
      <ChartWindow
        name="USDJPY,H4"
        pad={[0, 7, 8, 6]}
        gap={[1, 0]}
        captionH={25}
        deal={{ red: true, top: 17, left: 5, width: 154, sell: ["105", "61", "7"], buy: ["105", "63", "9"] }}
      >
        <Plot
          w={483} h={268} origin={[24, 87]} box={[35, 95, 1362, 842]} split={[589, 597]}
          gridX={grid(114, 77.55, 17)} gridY={jpyY} subGrid={[656, 697, 740]} axisX={1377}
          labels={zipLabels(jpyY, ["106.340", "105.940", "105.550", "105.150", "104.750", "104.360", "103.960"])}
          subLabels={[[612, "234.2387"], [656, "100"], [697, "0.00"], [740, "-100"], [825, "-348.7673"]]}
          times={[[35, "10 Sep 2020"], [190, "14 Sep 00:00"], [345, "15 Sep 08:00"], [500, "16 Sep 16:00"], [655, "18 Sep 00:00"], [810, "21 Sep 08:00"], [965, "22 Sep 16:00"], [1120, "24 Sep 00:00"], [1275, "25 Sep 08:00"]]}
          timeY={873} last={248} title="105.617"
          header={[11, "USDJPY,H4  105.555 105.689 105.538 105.617"]}
          sub={[626, "CCI(14) 207.7384"]}
        >
          {(X, Y, o) => (
            <>
              <Candles data={jpyCandles} X={X} Y={Y} />
              <Curve pts={cci} origin={o} color="#2f8f88" />
            </>
          )}
        </Plot>
      </ChartWindow>
    </Stack>
  </Desktop>
);

const ChartTabs = styled(TabStrip)`
  margin: 1px 0 0 1px;
  padding: 0 4px 0 2px;
  height: 18px;
`;
const TabScroll = styled.button`
  width: 7px;
  height: 14px;
  margin-left: 8px;
  font-size: 7px;
  color: #777;
`;

/* ---------- mailbox ---------- */

const Terminal = styled.section`
  display: flex;
  flex: none;
  margin-top: 1px;
  padding-right: 2px;
  border-top: 1px solid #bdbdbd;
  border-bottom: 2px solid #c9c9c9;
`;
const Spine = styled.div`
  flex: none;
  width: 4px;
  border-right: 1px solid #9b9b9b;
  background: linear-gradient(#e8f0f7, #bdd1e6);
`;
const TerminalBody = styled.div`
  flex: 1;
  min-width: 0;
`;
const MailArea = styled.div`
  display: flex;
  background: #fff;
`;
const MailTable = styled.table`
  flex: 1;
  table-layout: fixed;
  th {
    height: 20px;
    padding: 0 5px;
    font-weight: 400;
    text-align: left;
    border-right: 1px solid #e4e4e4;
    border-bottom: 1px solid #d5d5d5;
    background: linear-gradient(#fff 50%, #f3f4f6);
  }
  td {
    height: 16px;
    padding: 0 3px 0 4px;
    line-height: 15px;
    font-weight: 700;
    color: #111;
    border-right: 1px solid #d0d0d0;
    border-bottom: 1px solid #dadada;
    white-space: nowrap;
  }
  td:first-child { padding-left: 2px; }
  tr:nth-child(odd) td { background: #eaeaea; }
  th:last-child, td:last-child { text-align: right; border-right: 0; }
`;
const Subject = styled.span`
  display: flex;
  align-items: center;
  gap: 5px;
`;
const Envelope = () => (
  <svg width="11" height="9" viewBox="0 0 11 9" aria-hidden="true">
    <rect x=".5" y=".5" width="10" height="8" rx="1" fill="#f6dd7e" stroke="#a68a3a" />
    <path d="M1 1.500l4.500 3.500L10 1.500M1 8l3-3M10 8L7 5" fill="none" stroke="#a68a3a" strokeWidth=".8" />
  </svg>
);
const mails = [
  ["New account registration", "MetaQuotes Software Corp.", "2020.09.25 19:30"],
  ["¡Bienvenido!", "Trading Platform", "2020.09.25 13:04"],
  ["¡Bienvenido!", "Trading Platform", "2020.09.25 13:04"],
  ["Hosting virtual incorporado, comercio con robots y señales 24/7", "Trading Platform", "2020.09.25 13:04"],
];
const MailTabs = styled(TabStrip)`
  height: 18px;
  padding-left: 2px;
`;

const StatusBar = styled.footer`
  display: grid;
  grid-template-columns: 464fr 94fr 83fr 57fr 58fr 55fr 56fr 53fr 104fr;
  flex: none;
  align-items: center;
  height: 20px;
  overflow: hidden;
`;
const StatusCell = styled.span`
  display: flex;
  align-items: center;
  gap: 3px;
  height: 14px;
  padding-left: 4px;
  white-space: nowrap;
  border-left: 1px solid #b5b5b5;
`;
const StatusHint = styled(StatusCell)`
  border: 0;
  padding: 0;
  text-indent: -6px;
`;

const timeframes = ["M1", "M5", "M15", "M30", "H1", "H4", "D1", "W1", "MN"];

const NavPanel = styled(Panel)`
  margin: 3px 0 6px;
  border-bottom-width: 1px;
`;
const NavTabs = styled(TabStrip)`
  height: 18px;
`;

function Navigator() {
  return (
    <NavPanel $grow>
      <PanelTitle>
        <PanelName>Navegador</PanelName>
        <PanelClose aria-label="Cerrar navegador"><CloseMark /></PanelClose>
      </PanelTitle>
      <Tree>
        <Node $tall $in={0}><Icon name="chart" size={12} />MetaTrader 4</Node>
        <Node $in={2}><Expander $open aria-label="Contraer" /><Icon name="users" size={13} />Cuentas</Node>
        <Node $tall $in={19}><Expander $open aria-label="Contraer" /><Icon name="server" size={13} />MetaQuotes-Demo</Node>
        <Node $tall $in={38}><Elbow /><Icon name="user" size={13} />77758951: Jorge</Node>
        <Node $in={2}><Expander aria-label="Expandir" /><Icon name="fx" size={13} />Indicadores</Node>
        <Node $tall $in={2}><Expander aria-label="Expandir" /><Icon name="expert" size={13} />Asesores Expertos</Node>
        <Node $in={2}><Expander aria-label="Expandir" /><Icon name="script" size={13} />Scripts</Node>
      </Tree>
      <NavTabs>
        <EdgeTab $on>Común</EdgeTab>
        <TabButton>Favoritos</TabButton>
      </NavTabs>
    </NavPanel>
  );
}

export default function App() {
  return (
    <Page>
      <Global />
      <MenuBar>
        {["Archivo", "Ver", "Insertar", "Gráficos", "Herramientas", "Ventana", "Ayuda"].map((m) => (
          <MenuItem key={m}>{m}</MenuItem>
        ))}
      </MenuBar>
      <CloseTip role="tooltip">Cerrar</CloseTip>

      <Toolbar $line>
        <MenuTool name="newChart" label="Nuevo gráfico" />
        <MenuTool name="profiles" label="Perfiles" />
        <Divider />
        <IconTool name="market" label="Observación del mercado" pressed />
        <IconTool name="target" label="Ventana de datos" />
        <IconTool name="favorites" label="Navegador" pressed />
        <IconTool name="terminal" label="Terminal" pressed />
        <IconTool name="tester" label="Probador" />
        <Divider />
        <TextTool><Icon name="order" />Nueva orden</TextTool>
        <IconTool name="gold" label="MetaEditor" />
        <IconTool name="cloud" label="VPS" />
        <IconTool name="signal" label="Señales" />
        <TextTool><Icon name="auto" />AutoTrading</TextTool>
        <Grip $wide />
        <IconTool name="bars" label="Barras" />
        <IconTool name="candle" label="Velas" pressed />
        <IconTool name="line" label="Línea" />
        <Divider />
        <IconTool name="zoomIn" label="Acercar" />
        <IconTool name="zoomOut" label="Alejar" />
        <IconTool name="tile" label="Mosaico" />
        <Divider />
        <IconTool name="scroll" label="Desplazamiento automático" pressed />
        <IconTool name="shift" label="Desplazar gráfico" />
        <Divider />
        <MenuTool name="indicators" label="Indicadores" />
        <MenuTool name="clock" label="Períodos" />
        <MenuTool name="template" label="Plantillas" />
        <Divider />
        <Push />
        <IconTool name="search" label="Buscar" />
        <IconTool name="chat" label="Chat" />
      </Toolbar>

      <Toolbar $shift>
        <IconTool name="cursor" label="Cursor" pressed />
        <IconTool name="cross" label="Cruz" />
        <Divider />
        <IconTool name="vline" label="Línea vertical" />
        <IconTool name="hline" label="Línea horizontal" />
        <IconTool name="trend" label="Línea de tendencia" />
        <IconTool name="channel" label="Canal" />
        <IconTool name="fibo" label="Fibonacci" />
        <Tool>A</Tool>
        <IconTool name="textLabel" label="Etiqueta de texto" />
        <MenuTool name="arrows" label="Flechas" />
        <Divider />
        <Grip />
        {timeframes.map((t) => (
          <Tool key={t} $pressed={t === "H4"}>{t}</Tool>
        ))}
        <Divider />
      </Toolbar>

      <Main>
        <Side>
          <Panel>
            <PanelTitle>
              <PanelName>Observación del mercado: 19:33:5</PanelName>
              <PanelClose aria-label="Cerrar panel"><CloseMark /></PanelClose>
            </PanelTitle>
            <MarketBody>
              <MarketTable>
                <colgroup><col width="50" /><col width="37" /><col width="38" /></colgroup>
                <thead>
                  <tr><th>Símbolo</th><th>Bid</th><th>Ask</th></tr>
                </thead>
                <tbody>
                  {quotes.map(([s, bid, ask, up], i) => (
                    <tr key={i}>
                      <td><Symbol><Direction up={up} />{s}</Symbol></td>
                      <Quote $up={up}>{bid}</Quote>
                      <Quote $up={up}>{ask}</Quote>
                    </tr>
                  ))}
                </tbody>
              </MarketTable>
              <Scrollbar thumb={140} name="Mercado" />
            </MarketBody>
            <TabStrip>
              <EdgeTab $on>Símbolos</EdgeTab>
              <TabButton>Gráfico de tick</TabButton>
            </TabStrip>
          </Panel>
          <Navigator />
        </Side>

        <Workspace>
          <Charts />
          <ChartTabs>
            <TabButton $on>EURUSD,H4</TabButton>
            <TabButton $pad={9}>USDCHF,H4</TabButton>
            <TabButton $pad={9}>GBPUSD,H4</TabButton>
            <TabButton $pad={9}>USDJPY,H4</TabButton>
            <Push />
            <TabScroll aria-label="Anterior">◂</TabScroll>
            <TabScroll aria-label="Siguiente">▸</TabScroll>
          </ChartTabs>
        </Workspace>
      </Main>

      <Terminal>
        <Spine />
        <TerminalBody>
          <MailArea>
            <MailTable>
              <colgroup><col width="549" /><col width="349" /><col width="107" /></colgroup>
              <thead>
                <tr><th>Título</th><th>De</th><th>Tiempo</th></tr>
              </thead>
              <tbody>
                {mails.map(([subject, from, time], i) => (
                  <tr key={i}>
                    <td><Subject><Envelope />{subject}</Subject></td>
                    <td>{from}</td>
                    <td>{time}</td>
                  </tr>
                ))}
              </tbody>
            </MailTable>
            <Scrollbar thumb={28} name="Correo" />
          </MailArea>
          <MailTabs>
            <TabButton>Operaciones</TabButton>
            <TabButton>Exposición</TabButton>
            <TabButton>Historial de cuentas</TabButton>
            <TabButton>Noticias</TabButton>
            <TabButton $bare>Alertas</TabButton>
            <TabButton $on>Buzón de correo<Badge>8</Badge></TabButton>
            <TabButton>Empresa</TabButton>
            <TabButton>Mercado</TabButton>
            <TabButton>Señales</TabButton>
            <TabButton>Artículos<Badge>884</Badge></TabButton>
            <TabButton>Code Base</TabButton>
            <TabButton>Expertos</TabButton>
            <TabButton>Registro</TabButton>
          </MailTabs>
        </TerminalBody>
      </Terminal>

      <StatusBar>
        <StatusHint>Para obtener ayuda, pulse F1</StatusHint>
        <StatusCell>Default</StatusCell>
        {range(6).map((i) => <StatusCell key={i} />)}
        <StatusCell>
          <svg width="19" height="11" viewBox="0 0 19 11" aria-hidden="true">
            {range(7).map((i) => <path key={i} d={`M${i * 2.7 + 1} 0V${7 - i * 0.6}`} stroke="#5c9a2e" strokeWidth="2" />)}
            {range(7).map((i) => <path key={i} d={`M${i * 2.7 + 1} ${8 - i * 0.6}V11`} stroke="#a03024" strokeWidth="2" />)}
          </svg>
          812/1 kb
        </StatusCell>
      </StatusBar>
    </Page>
  );
}
